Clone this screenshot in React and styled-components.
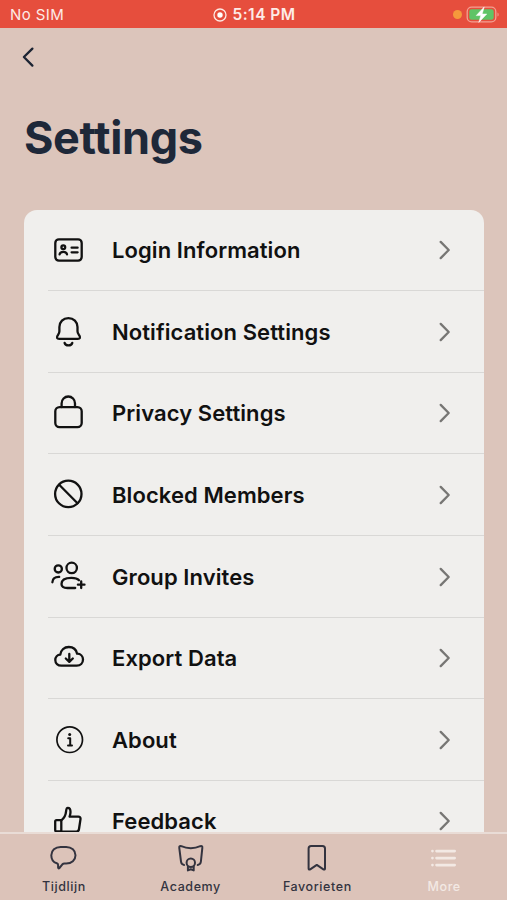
import React from "react";
import styled, { createGlobalStyle } from "styled-components";

const GlobalStyle = createGlobalStyle`
  * {
    box-sizing: border-box;
  }

  body {
    margin: 0;
    font-family: Inter, "Liberation Sans", sans-serif;
    background: #dcc5bb;
  }
`;

// ==== ICONS ====

const LoginIcon = () => (
  <Icon viewBox="0 0 40 40">
    <rect x="7.3" y="9.3" width="26.4" height="21.4" rx="3.6" />
    <circle cx="15.3" cy="17.2" r="1.9" />
    <path d="M11.6 24.4c.5-3.4 6.9-3.4 7.4 0M23.6 17.7h6M23.6 22.3h6" />
  </Icon>
);

const BellIcon = () => (
  <Icon viewBox="0 0 40 40">
    <path d="M20.4 6.1c-5.2 0-9 3.8-9 9v4.1c0 1.6-.5 2.5-1.4 3.8-1.9 2.3-1 3.9 1.2 3.9h18.6c2.2 0 3.1-1.6 1.2-3.9-1-1.3-1.5-2.2-1.5-3.8v-4.1c0-5.2-3.9-9-9.1-9z" />
    <path d="M16.6 30.9c.9 3.4 6.8 3.4 7.7 0" />
  </Icon>
);

const LockIcon = () => (
  <Icon viewBox="0 0 40 40">
    <rect x="7.3" y="14.1" width="26.4" height="20" rx="4.2" />
    <path d="M13.6 14v-3.6a6.7 6.9 0 0 1 13.4 0V14" />
  </Icon>
);

const BlockedIcon = () => (
  <Icon viewBox="0 0 40 40">
    <circle cx="20.3" cy="18.9" r="13.2" />
    <path d="M11.2 9.7l18.3 18.5" />
  </Icon>
);

const GroupIcon = () => (
  <Icon viewBox="0 0 40 40">
    <circle cx="10.3" cy="11.9" r="3.6" />
    <circle cx="23.7" cy="10.9" r="5.2" />
    <path d="M4.4 25.3c.1-3.5 2.3-5.5 6.8-5.4" />
    <path d="M31 23.2c-1.4-1.6-3.9-2.4-7.6-2.4-6 0-9.9 2.1-9.9 6.2 0 2.6 2.1 4 6 4h7.7" />
    <path d="M33.2 24.4v6.6M29.9 27.7h6.6" />
  </Icon>
);

const ExportIcon = () => (
  <Icon viewBox="0 0 40 40">
    <path d="M13.4 27.7c-3.6 0-6.1-2.3-6.1-5.6 0-3 2.1-5.3 5-5.5.6-4.7 4-7.6 8.5-7.6 4.4 0 7.5 2.7 8.3 6.7 3.6.1 5.9 2.6 5.9 5.9 0 3.6-2.5 6.1-6.3 6.1z" />
    <path d="M21.3 15.9v7.6M17.8 20.5l3.5 3.3 3.5-3.3" />
  </Icon>
);

const AboutIcon = () => (
  <Icon viewBox="0 0 40 40">
    <circle cx="21.7" cy="19.7" r="12.8" strokeWidth="1.7" />
    <circle cx="21.7" cy="14.4" r="1.5" fill="#111" stroke="none" />
    <path d="M20.2 18.2h2v7.1M20 25.4h4" strokeWidth="2" />
  </Icon>
);

const ThumbIcon = () => (
  <Icon viewBox="0 0 40 40">
    <path d="M13.3 19.2H8.6c-.9 0-1.4.5-1.4 1.4v8.5c0 .9.5 1.4 1.4 1.4h4.7z" />
    <path d="M13.3 19.4c2.6-1.8 4.4-4.8 4.8-9.2.2-2.1.7-3.3 1.7-3.3 1.7 0 2.7 1.6 2.7 4.2 0 1.8-.4 3.2-.9 4.5h8.7c1.5 0 2.4 1 2.2 2.5l-1.5 9.9c-.2 1.7-1.1 2.6-2.7 2.6h-15" />
  </Icon>
);

const Chevron = () => (
  <ChevronIcon viewBox="0 0 12 20">
    <path d="M1.7 1.9l8 8.1-8 8.1" />
  </ChevronIcon>
);

const ChatIcon = () => (
  <TabIcon viewBox="0 0 32 32">
    <path d="M12.6 4.9h5.6c5.4 0 9.3 3.5 9.3 8.3s-3.9 8.3-9.3 8.3h-1.8c-.8 0-1.4.2-2 .8l-3 3.7c-.6.7-1.3.4-1.3-.5v-2.4c0-1-.4-1.5-1.3-1.8-3.5-1.1-5.5-4-5.5-8.1 0-4.8 3.9-8.3 9.3-8.3z" />
  </TabIcon>
);

const AcademyIcon = () => (
  <TabIcon viewBox="0 0 32 32">
    <path d="M9.1 23c-2.1-.4-2.9-1.3-3.1-3.5L4.3 6.1c-.3-1.9.5-2.5 2-1.9 3.1 1.4 6 2 9.5 2s6.4-.6 9.5-2c1.5-.6 2.3 0 2 1.9l-1.4 13.4c-.2 2.2-1 3.1-3.2 3.5" />
    <circle cx="15.8" cy="20.8" r="4.2" />
    <path d="M12.9 24.4v4l2.9-1.1 2.9 1.1v-4" />
  </TabIcon>
);

const BookmarkIcon = () => (
  <TabIcon viewBox="0 0 32 32">
    <path d="M10.1 4.1h11.4c1.7 0 2.5.8 2.5 2.5v19.9c0 1.1-.7 1.4-1.6.8l-6.6-4.4-6.6 4.4c-.9.6-1.6.3-1.6-.8V6.6c0-1.7.8-2.5 2.5-2.5z" />
  </TabIcon>
);

const MoreIcon = () => (
  <TabIcon viewBox="0 0 32 32">
    <path d="M8.5 9.1h18.2M8.5 16.1h18.2M8.5 23.1h18.2" strokeWidth="2.6" />
    <path d="M4.4 9.1h.1M4.4 16.1h.1M4.4 23.1h.1" strokeWidth="2.6" />
  </TabIcon>
);

const items = [
  { label: "Login Information", icon: LoginIcon },
  { label: "Notification Settings", icon: BellIcon },
  { label: "Privacy Settings", icon: LockIcon },
  { label: "Blocked Members", icon: BlockedIcon },
  { label: "Group Invites", icon: GroupIcon },
  { label: "Export Data", icon: ExportIcon },
  { label: "About", icon: AboutIcon },
  { label: "Feedback", icon: ThumbIcon },
];

const tabs = [
  { label: "Tijdlijn", icon: ChatIcon },
  { label: "Academy", icon: AcademyIcon },
  { label: "Favorieten", icon: BookmarkIcon },
  { label: "More", icon: MoreIcon, active: true },
];

const App = () => {
  return (
    <Screen>
      <GlobalStyle />
      <StatusBar>
        <Carrier>No SIM</Carrier>
        <Clock>
          <svg width="14" height="14" viewBox="0 0 14 14">
            <circle cx="7" cy="7" r="6" fill="none" stroke="#fde9e4" strokeWidth="1.3" />
            <circle cx="7" cy="7" r="2.7" fill="#fff" />
          </svg>
          <span>5:14 PM</span>
        </Clock>
        <Battery>
          <MicDot />
          <svg width="34" height="18" viewBox="0 0 34 18">
            <rect x="1.2" y="1.2" width="28.6" height="14.6" rx="4.4" fill="none" stroke="#f3a092" strokeWidth="1.3" />
            <rect x="3.3" y="3.2" width="24.4" height="10.6" rx="2.4" fill="#5fc466" />
            <path d="M31.5 6.4v4.2c1.5-.6 1.5-3.6 0-4.2z" fill="#f3a092" />
            <path d="M18.2.9L10.2 9.6h4.6l-2 6.8 8-8.4h-4.6z" fill="#fff" stroke="#fff" strokeWidth=".5" strokeLinejoin="round" />
          </svg>
        </Battery>
      </StatusBar>

      <Header>
        <BackButton aria-label="Back">
          <svg width="14" height="22" viewBox="0 0 14 22">
            <path d="M11.4 2.6L2.9 11l8.5 8.6" fill="none" stroke="#1c2433" strokeWidth="2.3" strokeLinecap="round" strokeLinejoin="round" />
          </svg>
        </BackButton>
        <Title>Settings</Title>
      </Header>

      <Content>
        <Card>
          {items.map(({ label, icon: ItemIcon }) => (
            <Row key={label}>
              <ItemIcon />
              <RowLabel>{label}</RowLabel>
              <Chevron />
            </Row>
          ))}
        </Card>
      </Content>

      <TabBar>
        {tabs.map(({ label, icon: Glyph, active }) => (
          <Tab key={label} $active={active}>
            <Glyph />
            <span>{label}</span>
          </Tab>
        ))}
      </TabBar>
    </Screen>
  );
};

// ==== STYLES ====

const Screen = styled.div`
  height: 900px;
  display: flex;
  flex-direction: column;
  overflow: hidden;
  background: #dcc5bb;
`;

const StatusBar = styled.div`
  flex: none;
  height: 28px;
  padding: 1px 8px 0 10px;
  display: grid;
  grid-template-columns: 1fr auto 1fr;
  align-items: center;
  background: #e64e3d;
  color: #fdebe7;
`;

const Carrier = styled.span`
  font-size: 15px;
  letter-spacing: 0.4px;
`;

const Clock = styled.div`
  display: flex;
  align-items: center;
  gap: 6px;
  margin-right: 1px;
  font-size: 15.5px;
  font-weight: 600;
  letter-spacing: 0.45px;
`;

const Battery = styled.div`
  display: flex;
  align-items: center;
  justify-content: flex-end;
  gap: 4px;
  margin-right: -1px;
`;

const MicDot = styled.i`
  width: 9px;
  height: 9px;
  border-radius: 50%;
  background: #f59a3c;
`;

const Header = styled.header`
  flex: none;
  height: 181.6px;
  padding: 18px 24px 0;
`;

const BackButton = styled.button`
  display: block;
  margin-left: -3px;
  padding: 0;
  border: 0;
  background: none;

  svg {
    display: block;
  }
`;

const Title = styled.h1`
  margin: 42px 0 0;
  font-size: 45px;
  line-height: 56px;
  font-weight: 700;
  letter-spacing: -0.35px;
  color: #1e2839;
`;

const Content = styled.main`
  flex: 1;
  min-height: 0;
  padding: 0 23px 0 24px;
  overflow: hidden;
`;

const Card = styled.div`
  padding-left: 24px;
  border-radius: 13px;
  background: #f0efed;
`;

const Row = styled.div`
  height: 81.6px;
  padding: 0.6px 33px 0 0;
  display: flex;
  align-items: center;
  border-bottom: 1px solid #d9d8d6;
`;

const RowLabel = styled.span`
  flex: 1;
  margin-left: 24px;
  font-size: 22px;
  font-weight: 600;
  letter-spacing: 0.08px;
  color: #111;
`;

const Icon = styled.svg`
  width: 40px;
  height: 40px;
  flex: none;
  fill: none;
  stroke: #111;
  stroke-width: 2.3;
  stroke-linecap: round;
  stroke-linejoin: round;
`;

const ChevronIcon = styled.svg`
  width: 12px;
  height: 20px;
  fill: none;
  stroke: #777674;
  stroke-width: 2.3;
  stroke-linecap: round;
  stroke-linejoin: round;
`;

const TabBar = styled.nav`
  flex: none;
  height: 68px;
  display: grid;
  grid-template-columns: repeat(4, 1fr);
  border-top: 2px solid #e9dcd6;
  background: #dcc3b9;
`;

const Tab = styled.a`
  padding: 8px 0 0 1px;
  display: flex;
  flex-direction: column;
  align-items: center;
  font-size: 12.5px;
  line-height: 16px;
  font-weight: 500;
  letter-spacing: 0.6px;
  color: ${({ $active }) => ($active ? "#f3e9e4" : "#33333f")};

  span {
    margin-top: 5px;
  }
`;

const TabIcon = styled.svg`
  width: 32px;
  height: 32px;
  fill: none;
  stroke: currentColor;
  stroke-width: 2;
  stroke-linecap: round;
  stroke-linejoin: round;
`;

export default App;
